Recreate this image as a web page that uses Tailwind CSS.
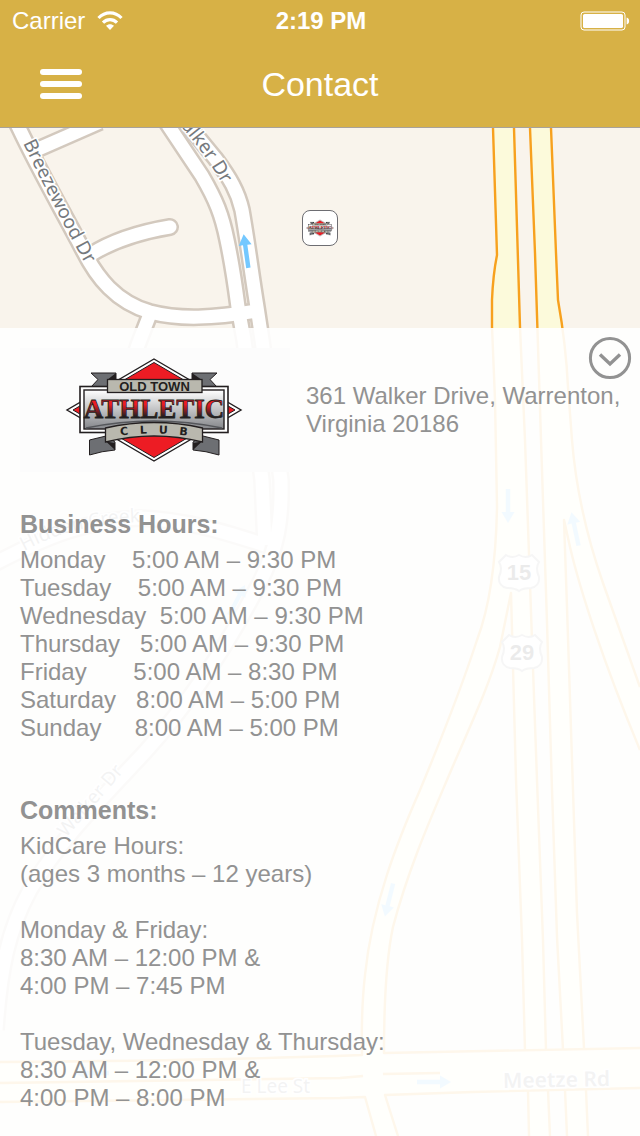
<!DOCTYPE html>
<html lang="en">
<head>
    <meta charset="UTF-8">
    <meta name="viewport" content="width=device-width, initial-scale=1">
    <title>Contact</title>
    <script src="https://cdn.jsdelivr.net/npm/@tailwindcss/browser@4"></script>
</head>
<body class="min-h-screen flex flex-col bg-white font-['Liberation_Sans',Arial,sans-serif] text-2xl/[28px] text-[#929292]">

    <header class="bg-[#d7b146] text-white border-b border-[#a8a29a]">
        <!-- Status bar -->
        <div class="grid grid-cols-3 items-center h-[42px] pl-3 pr-2.5">
            <div class="flex items-center gap-3">
                <span>Carrier</span>
                <svg class="w-[26px] h-5" viewBox="0 0 26 20" fill="none" stroke="#fff" stroke-width="3.2" aria-hidden="true">
                    <path d="M1.500 7C8 .2 18 .2 24.500 7"/>
                    <path d="M6 11.700c4-4 10-4 14 0"/>
                    <path d="M9 14.800c2.200-2.200 5.800-2.200 8 0L13 19z" fill="#fff" stroke="none"/>
                </svg>
            </div>
            <div class="text-center font-bold">2:19 PM</div>
            <svg class="justify-self-end w-[50px] h-5" viewBox="0 0 50 20" aria-hidden="true">
                <rect x="1" y="1" width="44" height="18" rx="3" fill="none" stroke="#fff" stroke-width="1"/>
                <rect x="3" y="3" width="40" height="14" rx="1.6" fill="#fff"/>
                <path d="M46.6 6.5c3.4.6 3.4 6.4 0 7z" fill="#fff"/>
            </svg>
        </div>
        <!-- Nav bar -->
        <div class="grid grid-cols-3 items-center h-[85px] px-10 pb-0.5">
            <button type="button" aria-label="Menu" class="flex flex-col gap-1.5 w-[42px]">
                <span class="h-1.5 w-full rounded-full bg-white"></span>
                <span class="h-1.5 w-full rounded-full bg-white"></span>
                <span class="h-1.5 w-full rounded-full bg-white"></span>
            </button>
            <h1 class="text-center text-[34px]/[40px]">Contact</h1>
        </div>
    </header>

    <main class="relative flex-1 flex flex-col bg-[#f9f4ec] overflow-hidden">
        <!-- Map -->
        <svg class="absolute inset-0 w-full h-full" viewBox="0 128 640 1008" preserveAspectRatio="xMinYMin slice" aria-hidden="true">
            <defs>
                <g id="streets" fill="none">
                    <path d="M8 106L19 128C40 172 62 210 83 250C97 278 116 302 150 312C180 320 214 318 257 311"/>
                    <path d="M36 150L100 122"/>
                    <path d="M90 255C112 241 140 232 170 227" stroke-linecap="round"/>
                    <path d="M150 314L138 345L120 400"/>
                    <path d="M152 100L170 128L202 176C216 200 222 215 227 240C233 268 236 292 238 307L244 340L262 480L265 545"/>
                    <path d="M168 100L192 130L215 158C230 178 238 192 242 210C248 244 251 270 257 307L262 340L281 480C282 520 278 548 258 586C226 648 190 702 145 752C100 800 58 842 30 890C8 930 0 970 -4 1030"/>
                    <path d="M-10 566C50 534 90 520 140 518C190 520 230 534 265 545"/>
                </g>
                <path id="arrow" d="M-2.2 17V-6H-6.5L0 -17L6.5 -6H2.2V17z"/>
                <path id="shield" d="M-13 -18Q-7 -14 0 -18Q7 -14 13 -18L20 -11Q16 -5 20 4Q21 13 12 15Q4 15 0 18Q-4 15 -12 15Q-21 13 -20 4Q-16 -5 -20 -11z"/>
                <path id="breezewood" d="M23 143Q54 208 94 280"/>
                <path id="walker" d="M140 84Q194 134 222 184"/>
                <path id="creek" d="M24 551Q80 520 160 522"/>
            </defs>

            <use href="#streets" stroke="#d3c9be" stroke-width="18"/>
            <use href="#streets" stroke="#fff" stroke-width="13"/>

            <!-- Highway surface -->
            <g fill="#fcfadb">
                <path d="M493 128L497 255Q493 275 492 300V327L495 400L497 507C496 560 490 606 477 640C460 692 440 742 420 790C398 840 372 905 365 975Q361 1010 362 1060H384C384 1010 386 960 393 927C408 870 430 820 447 780C468 730 488 690 500 647L511 593L516 780L522 940L525 1056H546L543 940L537 780L532 640L525 440L520 327L514 128z"/>
                <path d="M530 128L535 253L541 440L547 623L552 790L557 937L563 1052H584L577 913L573 790L567 607L564 520L570 547C580 590 604 664 640 750V687L603 583C588 540 576 490 572 440L568 387Q566 345 558 300L556 253L551 128z"/>
                <path d="M0 1062Q200 1061 362 1056L640 1048V1088L385 1096L340 1098L0 1102z"/>
                <path d="M528 1088L529 1136H550L548 1088zM565 1088L567 1136H588L586 1088zM364 1094L376 1136H398L385 1094z"/>
            </g>
            <!-- Highway edges -->
            <g fill="none" stroke="#f7a11e" stroke-width="2.4" stroke-linejoin="round">
                <path d="M493 128L497 255Q493 275 492 300V327L495 400L497 507C496 560 490 606 477 640C460 692 440 742 420 790C398 840 372 905 365 975Q361 1010 362 1055Q200 1061 0 1062"/>
                <path d="M514 128L520 327L525 440L532 640L537 780L543 940L546 1050"/>
                <path d="M525 1051L522 940L516 780L511 593L500 647C488 690 468 730 447 780C430 820 408 870 393 927C386 960 384 1010 384 1053L640 1048"/>
                <path d="M530 128L535 253L541 440L547 623L552 790L557 937L563 1050"/>
                <path d="M551 128L556 253L558 300Q566 345 568 387L572 440C576 490 588 540 603 583L640 687"/>
                <path d="M640 750C604 664 580 590 570 547L564 520L567 607L573 790L577 913L584 1048"/>
                <path d="M0 1083L340 1078L363 1076M383 1074L440 1073"/>
                <path d="M0 1102L340 1098L365 1097L376 1136M398 1136L385 1095L473 1092L640 1088"/>
                <path d="M528 1091L529 1136M548 1090L550 1136M565 1090L567 1136M586 1090L588 1136"/>
            </g>

            <g fill="#74c8ff">
                <use href="#arrow" transform="translate(246 251) rotate(-8)"/>
                <use href="#arrow" transform="translate(508 506) rotate(180)"/>
                <use href="#arrow" transform="translate(575 529) rotate(-12)"/>
                <use href="#arrow" transform="translate(237 600) rotate(28)"/>
                <use href="#arrow" transform="translate(389 900) rotate(194)"/>
                <use href="#arrow" transform="translate(434 1082) rotate(90)"/>
                <use href="#arrow" transform="translate(92 1073) rotate(-90)"/>
            </g>

            <g fill="#fff" stroke="#999" stroke-width="2">
                <use href="#shield" x="519" y="573"/>
                <use href="#shield" x="522" y="653"/>
            </g>
            <g class="font-['Liberation_Sans',Arial,sans-serif] font-bold text-[22px]" fill="#222" text-anchor="middle">
                <text x="519" y="580">15</text>
                <text x="522" y="660">29</text>
            </g>

            <g class="font-['Noto_Sans',sans-serif] text-[19px]" fill="#75797d" stroke="#fff" stroke-width="3" paint-order="stroke">
                <text><textPath href="#breezewood">Breezewood Dr</textPath></text>
                <text text-anchor="end"><textPath href="#walker" startOffset="100%">Walker Dr</textPath></text>
                <text><textPath href="#creek">Hidden Creek</textPath></text>
                <text transform="translate(66 838) rotate(-49)">Walker Dr</text>
                <text x="241" y="1093">E Lee St</text>
                <text class="font-semibold text-[21px]" transform="translate(503 1088) rotate(-1)">Meetze Rd</text>
            </g>
        </svg>

        <div class="relative h-[200px] shrink-0 flex items-center justify-center">
            <a href="#details" aria-label="Old Town Athletic Club" class="flex items-center justify-center size-9 rounded-lg border border-[#6d6d72] bg-white">
                <svg class="w-7 h-[18px]" viewBox="46 9 176 106" aria-hidden="true"><use href="#logo"/></svg>
            </a>
        </div>

        <!-- Details panel -->
        <section id="details" class="relative flex-1 bg-white/91 py-5 pl-5 pr-2">
            <button type="button" aria-label="Close details" class="absolute top-2 right-2">
                <svg class="size-11" viewBox="0 0 44 44" fill="none" stroke="#929292" stroke-width="3">
                    <circle cx="22" cy="22" r="19.6"/>
                    <path d="M12 18.5l10 9.5 10-9.5" stroke-width="3.4"/>
                </svg>
            </button>

            <div class="flex items-center gap-4">
                <svg class="w-[270px] h-[124px] shrink-0 bg-[#fcfcfc]" viewBox="0 0 270 124" role="img" aria-label="Old Town Athletic Club logo">
                    <defs>
                        <linearGradient id="plate" x1="0" y1="0" x2="0" y2="1">
                            <stop offset="0" stop-color="#fff"/>
                            <stop offset="1" stop-color="#85878b"/>
                        </linearGradient>
                        <linearGradient id="letters" x1="0" y1="0" x2="0" y2="1">
                            <stop offset=".35" stop-color="#ed1c24"/>
                            <stop offset=".75" stop-color="#231f20"/>
                        </linearGradient>
                        <path id="clubArc" d="M80 91Q134 80 188 91"/>
                    </defs>
                    <g id="logo">
                        <!-- diamond -->
                        <path d="M134 11L221 62L134 113L47 62z" fill="#fff" stroke="#231f20" stroke-width="1.4"/>
                        <path d="M134 14.5L215 62L134 109.500L53 62z" fill="#ed1c24" stroke="#231f20"/>
                        <!-- ribbon tails -->
                        <g fill="#6d6f73" stroke="#231f20">
                            <path d="M71 25H96V32H88V39H71L78 31.500z"/>
                            <path d="M197 25H172V32H181V39H197L190 31.500z"/>
                            <path d="M69.500 92L86 88L95 94V102Q82 103 69.500 107z"/>
                            <path d="M199 92L183 88L173 94V102Q186 103 199 107z"/>
                        </g>
                        <path d="M96 25V32H87zM172 25V32H182zM86 93.500L95 95V102zM182 93.500L173 95V102z" fill="#231f20"/>
                        <!-- name plate -->
                        <rect x="60" y="38.500" width="148" height="46" fill="#fff" stroke="#231f20" stroke-width="1.6"/>
                        <rect x="64" y="42" width="140" height="39" fill="url(#plate)" stroke="#231f20" stroke-width="1.4"/>
                        <path d="M66 80Q134 66 202 80" fill="none" stroke="#55575b" stroke-width="1.6"/>
                        <text x="134" y="70" text-anchor="middle" class="font-['Liberation_Serif',serif] font-bold text-[27px]" fill="url(#letters)" stroke="#231f20" stroke-width=".8">ATHLETIC</text>
                        <!-- banners -->
                        <rect x="87.500" y="31.500" width="94.500" height="13" fill="#b9b8ae" stroke="#231f20" stroke-width="1.3"/>
                        <text x="134.500" y="42.500" text-anchor="middle" class="font-['Liberation_Sans',Arial,sans-serif] font-bold text-[13px]" fill="#231f20">OLD TOWN</text>
                        <path d="M85.500 80Q134 69 182.500 80V94Q134 82 85.500 94z" fill="#b9b8ae" stroke="#231f20" stroke-width="1.3"/>
                        <text text-anchor="middle" class="font-['DejaVu_Sans',sans-serif] font-bold text-[11px]" fill="#231f20"><textPath href="#clubArc" startOffset="50%">C&#160;&#160; L&#160;&#160; U&#160;&#160; B</textPath></text>
                    </g>
                </svg>
                <address class="not-italic">361 Walker Drive, Warrenton,<br>Virginia 20186</address>
            </div>

            <h2 class="mt-[38px] font-bold text-[25px]/[28px]">Business Hours:</h2>
            <ul class="mt-2 [&>li]:whitespace-pre">
                <li>Monday    5:00 AM – 9:30 PM</li>
                <li>Tuesday    5:00 AM – 9:30 PM</li>
                <li>Wednesday  5:00 AM – 9:30 PM</li>
                <li>Thursday   5:00 AM – 9:30 PM</li>
                <li>Friday       5:00 AM – 8:30 PM</li>
                <li>Saturday   8:00 AM – 5:00 PM</li>
                <li>Sunday     8:00 AM – 5:00 PM</li>
            </ul>

            <h2 class="mt-[54px] font-bold text-[25px]/[28px]">Comments:</h2>
            <p class="mt-2">KidCare Hours:<br>(ages 3 months – 12 years)</p>
            <p class="mt-7">Monday &amp; Friday:<br>8:30 AM – 12:00 PM &amp;<br>4:00 PM – 7:45 PM</p>
            <p class="mt-7">Tuesday, Wednesday &amp; Thursday:<br>8:30 AM – 12:00 PM &amp;<br>4:00 PM – 8:00 PM</p>
        </section>
    </main>

</body>
</html>
